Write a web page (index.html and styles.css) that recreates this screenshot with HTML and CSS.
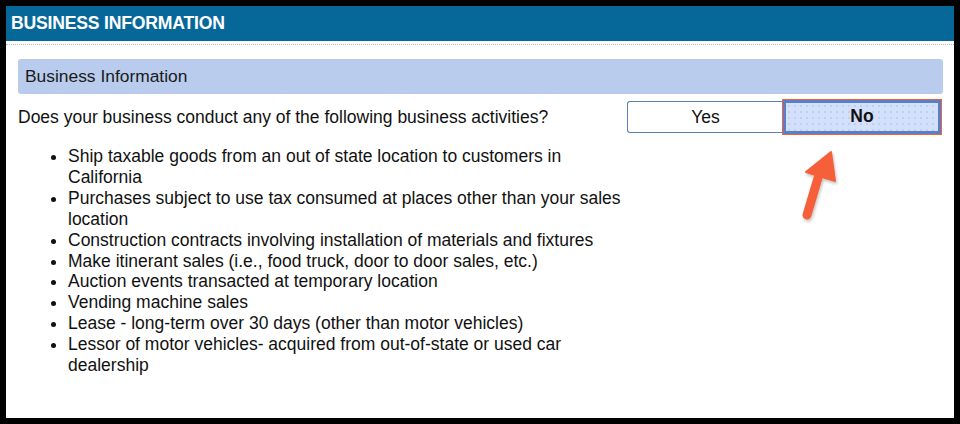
FILE: index.html
```html
<!DOCTYPE html>
<html>
<head>
<meta charset="utf-8">
<link rel="stylesheet" href="styles.css">
</head>
<body>
<div class="frame">
  <div class="header">BUSINESS INFORMATION</div>
  <div class="rule"></div>
  <div class="panel">Business Information</div>
  <div class="content">
    <div class="left">
      <p class="question">Does your business conduct any of the following business activities?</p>
      <ul class="items">
        <li>Ship taxable goods from an out of state location to customers in California</li>
        <li>Purchases subject to use tax consumed at places other than your sales location</li>
        <li>Construction contracts involving installation of materials and fixtures</li>
        <li>Make itinerant sales (i.e., food truck, door to door sales, etc.)</li>
        <li>Auction events transacted at temporary location</li>
        <li>Vending machine sales</li>
        <li>Lease - long-term over 30 days (other than motor vehicles)</li>
        <li>Lessor of motor vehicles- acquired from out-of-state or used car dealership</li>
      </ul>
    </div>
    <div class="choices">
      <div class="btn yes">Yes</div>
      <div class="btn no">No</div>
    </div>
    <svg class="arrow" width="60" height="80" viewBox="0 0 60 80">
      <defs>
        <filter id="sh" x="-30%" y="-30%" width="160%" height="160%">
          <feDropShadow dx="1" dy="2" stdDeviation="1.5" flood-color="#000" flood-opacity="0.25"/>
        </filter>
      </defs>
      <g filter="url(#sh)">
        <line x1="12" y1="70" x2="23" y2="33" stroke="#f5603a" stroke-width="9" stroke-linecap="round"/>
        <polygon points="36,7 40,36 11,27" fill="#f5603a" stroke="#f5603a" stroke-width="2" stroke-linejoin="round"/>
      </g>
    </svg>
  </div>
</div>
</body>
</html>
```

FILE: styles.css
```css
* { box-sizing: border-box; }
html, body {
  margin: 0;
  padding: 0;
  background: #000;
}
.frame {
  width: 960px;
  height: 424px;
  border: 6px solid #000;
  background: #fff;
  font-family: "Liberation Sans", Arial, sans-serif;
  color: #111;
  position: relative;
  overflow: hidden;
}
.header {
  height: 35px;
  background: #066899;
  color: #fff;
  font-weight: bold;
  font-size: 17.6px;
  line-height: 35px;
  padding-left: 5px;
  letter-spacing: -0.2px;
}
.rule {
  margin-top: 3px;
  height: 1px;
  border-top: 1px dotted #b8b8b8;
}
.panel {
  margin: 14px 0 0 12px;
  width: 925px;
  height: 35px;
  background: #b9cced;
  border-radius: 3px;
  font-size: 17.4px;
  line-height: 34px;
  padding-left: 7px;
  color: #1a1a1a;
}
.content {
  display: flex;
  align-items: flex-start;
  margin-top: 6px;
  padding-left: 12px;
  position: relative;
}
.left {
  width: 609px;
}
.question {
  margin: 0;
  font-size: 17.5px;
  line-height: 20px;
  padding-top: 7px;
}
.items {
  margin: 19px 0 0 0;
  padding-left: 50px;
  font-size: 17.5px;
  line-height: 20.9px;
  width: 612px;
}
.choices {
  display: flex;
  margin-top: 0;
}
.btn {
  font-size: 17.5px;
  text-align: center;
  color: #111;
}
.yes {
  width: 156px;
  height: 32px;
  margin-top: 1px;
  line-height: 30px;
  border: 1px solid #5a7fbd;
  border-right: none;
  border-radius: 3px 0 0 3px;
  background: #fff;
}
.no {
  width: 158px;
  height: 34px;
  line-height: 27px;
  font-weight: bold;
  border: 3px solid #5a7fc6;
  box-shadow: 0 0 0 1px #f0643c;
  background-color: #d3e0fb;
  background-image: radial-gradient(circle, #b7c6e6 0.6px, transparent 0.9px);
  background-size: 6px 6px;
}
.arrow {
  position: absolute;
  left: 789px;
  top: 45px;
}
```
